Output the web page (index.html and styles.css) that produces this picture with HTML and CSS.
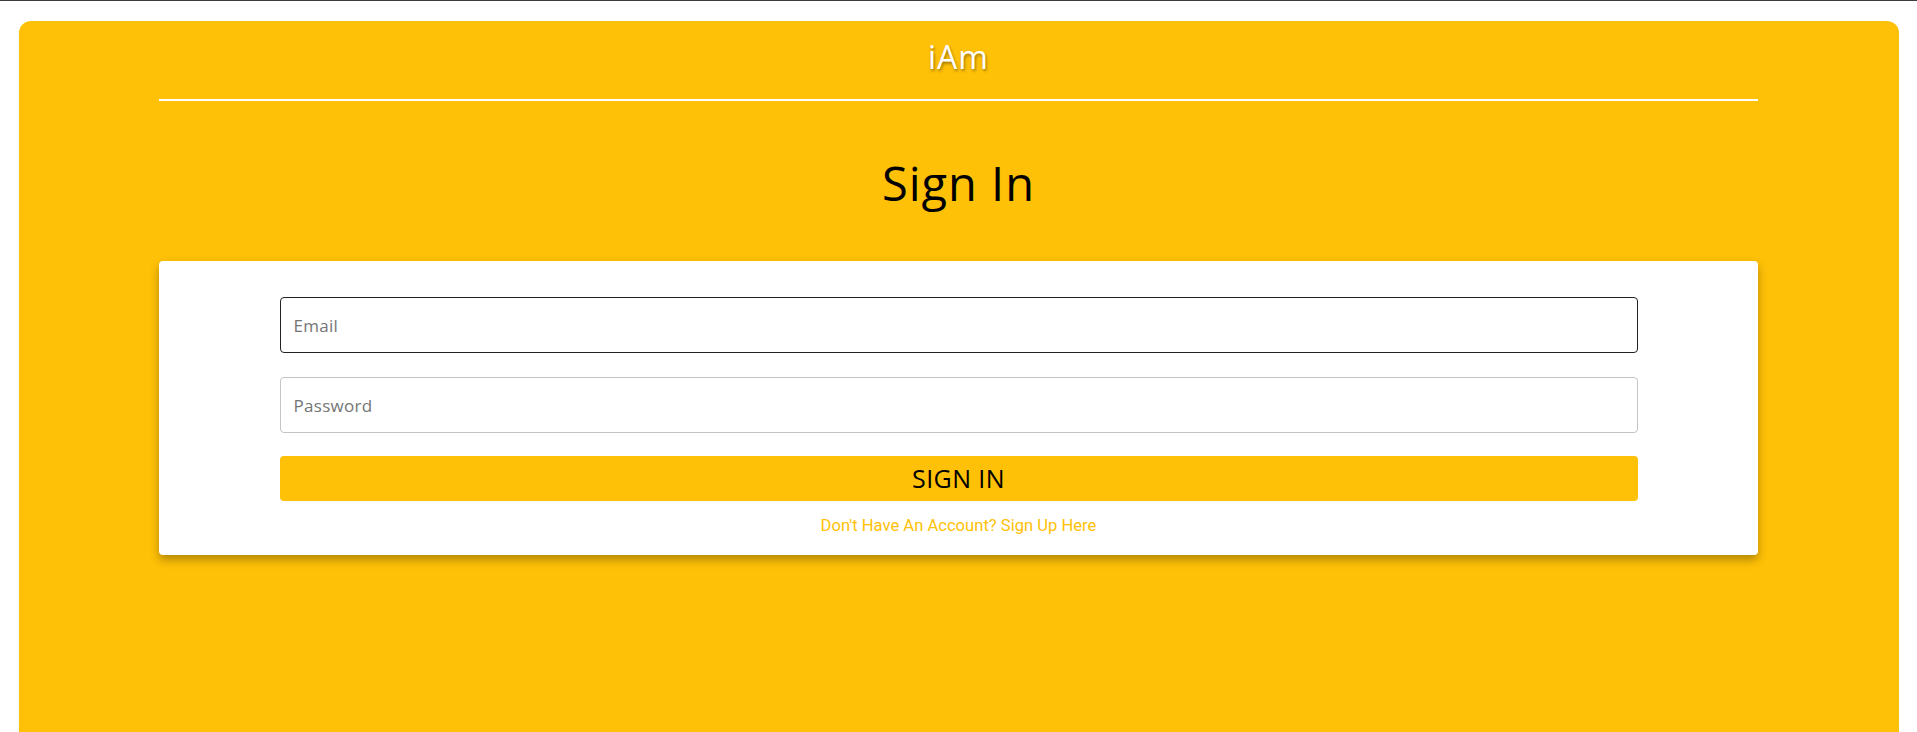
FILE: index.html
```html
<!DOCTYPE html>
<html lang="en">
<head>
<meta charset="utf-8">
<title>iAm - Sign In</title>
<link rel="stylesheet" href="styles.css">
</head>
<body>
<div class="page">
  <main class="panel">
    <div class="inner">
      <header class="brand-bar">
        <div class="brand">iAm</div>
      </header>
      <h1 class="title">Sign In</h1>
      <form class="card">
        <div class="fields">
          <input class="field field-active" type="email" placeholder="Email">
          <input class="field" type="password" placeholder="Password">
          <button class="submit" type="button">SIGN IN</button>
          <a class="signup" href="#">Don't Have An Account? Sign Up Here</a>
        </div>
      </form>
    </div>
  </main>
</div>
</body>
</html>
```
FILE: styles.css
```css
html, body {
  margin: 0;
  padding: 0;
  overflow: hidden;
  background: #fff;
}
.page {
  border-top: 1px solid #3d3d3d;
  padding: 20px 18px 0 19px;
  height: 800px;
  box-sizing: border-box;
}
.panel {
  background: #ffc107;
  border-radius: 12px 12px 0 0;
  height: 100%;
  font-family: "Open Sans", "Liberation Sans", sans-serif;
}
.inner {
  padding: 0 141px 0 140px;
}
.brand-bar {
  padding-top: 20px;
  padding-bottom: 26px;
  border-bottom: 2px solid #fff;
  display: flex;
  justify-content: center;
}
.brand {
  font-size: 32px;
  line-height: 32px;
  letter-spacing: 1px;
  color: #fff;
  text-shadow: 1px 2px 3px rgba(0,0,0,0.4);
}
.title {
  margin: 59px 0 0;
  font-size: 47px;
  line-height: 47px;
  letter-spacing: 1px;
  font-weight: 400;
  color: #000;
  text-align: center;
}
.card {
  margin: 54px 0 0;
  background: #fff;
  border-radius: 4px;
  box-shadow: 0 5px 10px rgba(0,0,0,0.3);
  padding: 36px 0 17px;
}
.fields {
  width: 1358px;
  margin: 0 auto;
  display: flex;
  flex-direction: column;
}
.field {
  height: 56px;
  box-sizing: border-box;
  border: 1px solid #c4c4c4;
  border-radius: 4px;
  padding: 0 13px;
  font-family: "Open Sans", "Liberation Sans", sans-serif;
  font-size: 17px;
  letter-spacing: 0.3px;
  color: #222;
  outline: none;
  margin-bottom: 24px;
}
.field::placeholder {
  color: #757575;
}
.field-active {
  border-color: #222;
}
.submit {
  margin-top: -1px;
  height: 45px;
  border: none;
  border-radius: 4px;
  background: #ffc107;
  color: #000;
  font-family: "Open Sans", "Liberation Sans", sans-serif;
  font-size: 25px;
  line-height: 45px;
  letter-spacing: 0.4px;
  padding: 0;
}
.signup {
  margin-top: 13px;
  align-self: center;
  font-family: Roboto, "Liberation Sans", sans-serif;
  font-size: 16.6px;
  line-height: 24px;
  color: #ffc107;
  text-decoration: none;
}
```
